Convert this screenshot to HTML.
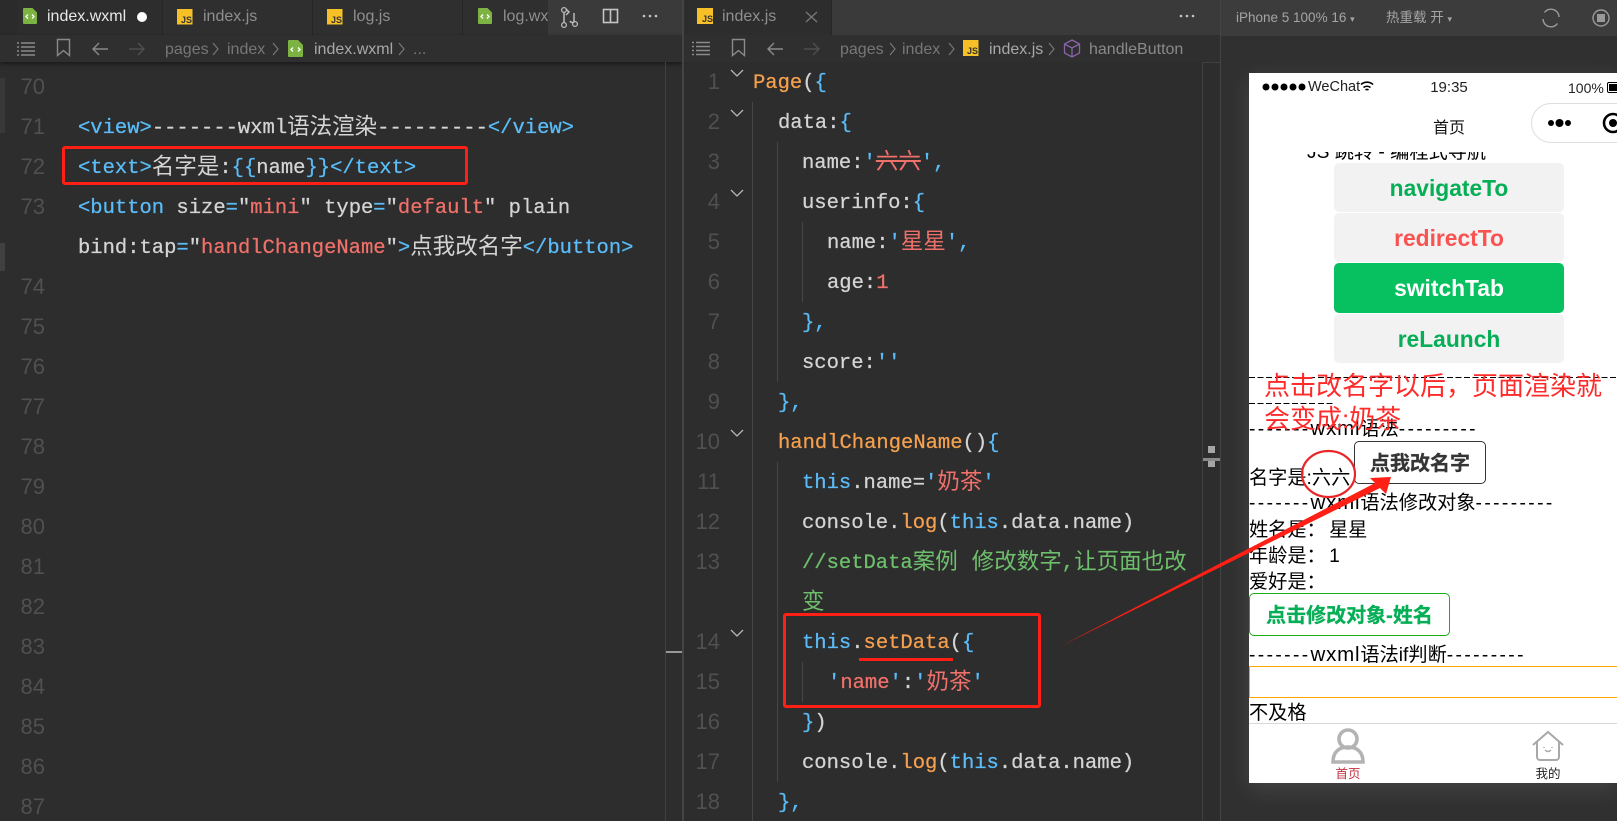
<!DOCTYPE html>
<html lang="zh"><head><meta charset="utf-8"><title>WXML editor</title>
<style>
html,body{margin:0;padding:0;background:#2d2d2d;}
#r{position:relative;width:1617px;height:821px;overflow:hidden;background:#2d2d2d;font-family:"Liberation Sans","Noto Sans CJK SC",sans-serif;}
#r *{box-sizing:border-box;}
.a{position:absolute;}
.l{position:absolute;height:40px;margin-top:2px;white-space:pre;font:20.5px/40px "Liberation Mono","Noto Sans CJK SC",monospace;color:#d4d4d4;-webkit-text-stroke:.25px currentColor;}
.l i{font-style:normal;}
.l i.c{font-family:"Noto Sans CJK SC",sans-serif;font-size:22.5px;line-height:10px;-webkit-text-stroke:0;position:relative;top:1px;}
.b{color:#5abcf8;}.s{color:#f0706a;}.o{color:#f5a04e;}.g{color:#6dbf6b;}.w{color:#d4d4d4;}
.n{position:absolute;height:40px;font:22px/40px "Liberation Sans",sans-serif;color:#505050;text-align:right;width:40px;}
.tab{position:absolute;top:0;height:35px;font-size:16px;line-height:34px;color:#8f8f8f;background:#2f2f2f;border-right:1px solid #262626;white-space:nowrap;overflow:hidden;}
.cr{position:absolute;top:35px;height:27px;font-size:16px;line-height:29px;color:#777;white-space:nowrap;}
.p{position:absolute;white-space:pre;color:#000;font-size:19.2px;line-height:26px;height:26px;}
.d{letter-spacing:2.4px;}
.x{font-size:20.5px;letter-spacing:.8px;}
.dl{position:absolute;height:1px;background:repeating-linear-gradient(90deg,#000 0 6px,transparent 6px 8.6px);}
.btn{position:absolute;left:1334px;width:230px;height:49px;border-radius:5px;background:#f2f2f2;font-weight:700;font-size:22.800px;line-height:51px;text-align:center;}
.rb{position:absolute;border:3px solid #ff1f14;border-radius:3px;}
.gd{position:absolute;width:1px;background:#464646;}
.js{position:absolute;font:bold 9px/10px "Liberation Sans",sans-serif;color:#333;}
</style></head><body><div id="r">

<!-- tab bars -->
<div class="a" style="left:0;top:0;width:683px;height:35px;background:#3a3a3a"></div>
<div class="a" style="left:684px;top:0;width:536px;height:35px;background:#3a3a3a"></div>
<div class="a" style="left:0;top:0;width:18px;height:35px;background:#2b2b2b"></div>
<div class="tab" style="left:18px;width:145px;background:#2d2d2d;color:#e8e8e8;padding-left:29px">index.wxml</div>
<div class="a" style="left:137px;top:12px;width:10px;height:10px;border-radius:50%;background:#fff;"></div>
<div class="tab" style="left:163px;width:150px;padding-left:40px">index.js</div>
<div class="tab" style="left:313px;width:150px;padding-left:40px">log.js</div>
<div class="tab" style="left:463px;width:85px;padding-left:40px;border-right:0">log.wx</div>
<div class="tab" style="left:684px;width:148px;background:#2d2d2d;padding-left:38px">index.js</div>

<!-- breadcrumbs -->
<div class="a" style="left:0;top:35px;width:683px;height:27px;background:#2f2f2f;box-shadow:0 2px 4px rgba(0,0,0,.45)"></div>
<div class="a" style="left:684px;top:35px;width:536px;height:27px;background:#2f2f2f"></div>

<!-- strips and rules -->
<div class="a" style="left:0;top:78px;width:5px;height:55px;background:#383838"></div>
<div class="a" style="left:0;top:243px;width:5px;height:28px;background:#404040"></div>
<div class="a" style="left:665px;top:62px;width:1px;height:759px;background:#404040"></div>
<div class="a" style="left:682px;top:0;width:2px;height:821px;background:#444"></div>
<div class="a" style="left:1202px;top:62px;width:1px;height:759px;background:#404040"></div>
<div class="a" style="left:1202px;top:62px;width:18px;height:1px;background:#404040"></div>
<div class="a" style="left:1220px;top:0;width:1px;height:821px;background:#444"></div>
<div class="a" style="left:666px;top:651px;width:16px;height:2px;background:#999"></div>
<div class="a" style="left:1208px;top:446px;width:7px;height:7px;background:#a5a5a5"></div>
<div class="a" style="left:1203px;top:458px;width:17px;height:3px;background:#8a8a8a"></div>
<div class="a" style="left:1208px;top:461px;width:7px;height:6px;background:#a5a5a5"></div>

<!-- tab and toolbar icons -->
<svg class="a" style="left:0;top:0" width="1220" height="62" fill="none">
<path d="M24 8h8.500l4.500 4.500V23a1 1 0 0 1-1 1H24a1 1 0 0 1-1-1V9a1 1 0 0 1 1-1z" fill="#7cb342"/><path d="M28 14.500l-2 2 2 2M32 14.500l2 2-2 2" stroke="#fff" stroke-width="1.300"/>
<g fill="#f6c026"><rect x="177" y="9" width="15.500" height="15.500"/><rect x="327" y="9" width="15.500" height="15.500"/><rect x="697" y="8" width="16" height="16"/><rect x="963" y="40" width="15.500" height="16"/></g>
<path d="M479 8h8.500l4.500 4.500V23a1 1 0 0 1-1 1h-12a1 1 0 0 1-1-1V9a1 1 0 0 1 1-1z" fill="#7cb342"/><path d="M483 14.500l-2 2 2 2M487 14.500l2 2-2 2" stroke="#fff" stroke-width="1.300"/>
<path d="M289 40h9l5 5v11a1 1 0 0 1-1 1h-13a1 1 0 0 1-1-1V41a1 1 0 0 1 1-1z" fill="#7cb342"/><path d="M293 47.500l-2 2 2 2M298 47.500l2 2-2 2" stroke="#fff" stroke-width="1.300"/>
<path d="M564 12v11M574 13v8c0 2-3 2-4 0M566 9l3 3-3 3" stroke="#bbb" stroke-width="1.500"/><circle cx="564" cy="10" r="2.400" stroke="#bbb" stroke-width="1.300"/><circle cx="564" cy="25" r="2.400" stroke="#bbb" stroke-width="1.300"/><circle cx="575" cy="24" r="2.400" stroke="#bbb" stroke-width="1.300"/>
<rect x="603.500" y="9.500" width="14" height="13" stroke="#c5c5c5" stroke-width="1.600"/><path d="M610.500 9v14" stroke="#c5c5c5" stroke-width="1.600"/>
<g fill="#c5c5c5"><circle cx="644" cy="16" r="1.300"/><circle cx="650" cy="16" r="1.300"/><circle cx="656" cy="16" r="1.300"/><circle cx="1181" cy="16" r="1.300"/><circle cx="1187" cy="16" r="1.300"/><circle cx="1193" cy="16" r="1.300"/></g>
<g stroke="#8a8a8a" stroke-width="1.400">
<path d="M17 43h2M21 43h14M17 47h2M21 47h14M17 51h2M21 51h14M17 55h2M21 55h14"/><path d="M692 42.500h2M696 42.500h14M692 46.500h2M696 46.500h14M692 50.500h2M696 50.500h14M692 54.500h2M696 54.500h14"/>
<path d="M57.500 39.500h12v16l-6-5-6 5z"/><path d="M732.500 39.500h12v16l-6-5-6 5z"/>
<path d="M108 49H93M99 43l-6 6 6 6"/><path d="M783 49h-15M774 43l-6 6 6 6"/>
</g>
<g stroke="#4f4f4f" stroke-width="1.400"><path d="M144 49h-15M138 43l6 6-6 6"/><path d="M819 49h-15M813 43l6 6-6 6"/></g>
<g stroke="#777" stroke-width="1.200"><path d="M213 43l5 6-5 6"/><path d="M273 43l5 6-5 6"/><path d="M399 43l5 6-5 6"/><path d="M890 43l5 6-5 6"/><path d="M949 43l5 6-5 6"/><path d="M1049 43l5 6-5 6"/></g>
<path d="M1072 40l7.500 4v9l-7.500 4-7.500-4v-9zM1064.500 44l7.500 4 7.500-4M1072 48v9" stroke="#8a63a8" stroke-width="1.300"/>
<path d="M806 12l11 10M817 12l-11 10" stroke="#777" stroke-width="1.400"/>
</svg>
<div class="js" style="left:181px;top:15px">JS</div>
<div class="js" style="left:331px;top:15px">JS</div>
<div class="js" style="left:702px;top:14px">JS</div>
<div class="js" style="left:967px;top:46px">JS</div>

<div class="cr" style="left:165px">pages</div><div class="cr" style="left:227px">index</div><div class="cr" style="left:314px;color:#a8a8a8">index.wxml</div><div class="cr" style="left:413px">...</div>
<div class="cr" style="left:840px">pages</div><div class="cr" style="left:902px">index</div><div class="cr" style="left:989px;color:#a8a8a8">index.js</div><div class="cr" style="left:1089px;color:#8a8a8a">handleButton</div>

<!-- left line numbers -->
<div class="n" style="left:5px;top:67px">70</div><div class="n" style="left:5px;top:107px">71</div><div class="n" style="left:5px;top:147px">72</div><div class="n" style="left:5px;top:187px">73</div>
<div class="n" style="left:5px;top:267px">74</div><div class="n" style="left:5px;top:307px">75</div><div class="n" style="left:5px;top:347px">76</div><div class="n" style="left:5px;top:387px">77</div><div class="n" style="left:5px;top:427px">78</div><div class="n" style="left:5px;top:467px">79</div><div class="n" style="left:5px;top:507px">80</div><div class="n" style="left:5px;top:547px">81</div><div class="n" style="left:5px;top:587px">82</div><div class="n" style="left:5px;top:627px">83</div><div class="n" style="left:5px;top:667px">84</div><div class="n" style="left:5px;top:707px">85</div><div class="n" style="left:5px;top:747px">86</div><div class="n" style="left:5px;top:787px">87</div>

<!-- left code -->
<div class="l" style="left:78px;top:107px"><i class="b">&lt;view&gt;</i>-------wxml<i class="c">语法渲染</i>---------<i class="b">&lt;/view&gt;</i></div>
<div class="l" style="left:78px;top:147px"><i class="b">&lt;text&gt;</i><i class="c">名字是</i>:<i class="b">{{</i>name<i class="b">}}&lt;/text&gt;</i></div>
<div class="l" style="left:78px;top:187px"><i class="b">&lt;button</i> size<i class="b">=</i>"<i class="s">mini</i>" type<i class="b">=</i>"<i class="s">default</i>" plain</div>
<div class="l" style="left:78px;top:227px">bind:tap<i class="b">=</i>"<i class="s">handlChangeName</i>"<i class="b">&gt;</i><i class="c">点我改名字</i><i class="b">&lt;/button&gt;</i></div>
<div class="rb" style="left:62px;top:146px;width:406px;height:39px"></div>

<!-- right guides -->
<div class="gd" style="left:752px;top:102px;height:719px"></div>
<div class="gd" style="left:777px;top:142px;height:240px"></div>
<div class="gd" style="left:777px;top:462px;height:320px"></div>
<div class="gd" style="left:802px;top:222px;height:80px"></div>
<div class="gd" style="left:802px;top:662px;height:40px"></div>

<!-- right numbers -->
<div class="n" style="left:680px;top:62px">1</div><div class="n" style="left:680px;top:102px">2</div><div class="n" style="left:680px;top:142px">3</div><div class="n" style="left:680px;top:182px">4</div><div class="n" style="left:680px;top:222px">5</div><div class="n" style="left:680px;top:262px">6</div><div class="n" style="left:680px;top:302px">7</div><div class="n" style="left:680px;top:342px">8</div><div class="n" style="left:680px;top:382px">9</div><div class="n" style="left:680px;top:422px">10</div><div class="n" style="left:680px;top:462px">11</div><div class="n" style="left:680px;top:502px">12</div><div class="n" style="left:680px;top:542px">13</div><div class="n" style="left:680px;top:622px">14</div><div class="n" style="left:680px;top:662px">15</div><div class="n" style="left:680px;top:702px">16</div><div class="n" style="left:680px;top:742px">17</div><div class="n" style="left:680px;top:782px">18</div>

<svg class="a" style="left:725px;top:60px" width="24" height="600" fill="none" stroke="#b5b5b5" stroke-width="1.300"><path d="M6 10l6 6 6-6M6 50l6 6 6-6M6 130l6 6 6-6M6 370l6 6 6-6M6 570l6 6 6-6"/></svg>

<!-- right code -->
<div class="l" style="left:753px;top:62px"><i class="o">Page</i><i class="w">(</i><i class="b">{</i></div>
<div class="l" style="left:778px;top:102px">data:<i class="b">{</i></div>
<div class="l" style="left:802px;top:142px">name:<i class="b">'</i><i class="c s" style="text-decoration:line-through">六六</i><i class="b">',</i></div>
<div class="l" style="left:802px;top:182px">userinfo:<i class="b">{</i></div>
<div class="l" style="left:827px;top:222px">name:<i class="b">'</i><i class="c s">星星</i><i class="b">',</i></div>
<div class="l" style="left:827px;top:262px">age:<i class="s">1</i></div>
<div class="l" style="left:802px;top:302px"><i class="b">},</i></div>
<div class="l" style="left:802px;top:342px">score:<i class="b">''</i></div>
<div class="l" style="left:778px;top:382px"><i class="b">},</i></div>
<div class="l" style="left:778px;top:422px"><i class="o">handlChangeName</i><i class="w">()</i><i class="b">{</i></div>
<div class="l" style="left:802px;top:462px"><i class="b">this</i>.name=<i class="b">'</i><i class="c s">奶茶</i><i class="b">'</i></div>
<div class="l" style="left:802px;top:502px">console.<i class="o">log</i>(<i class="b">this</i>.data.name)</div>
<div class="l g" style="left:802px;top:542px">//setData<i class="c">案例</i><i class="c" style="margin-left:14px">修改数字</i>,<i class="c">让页面也改</i></div>
<div class="l g" style="left:802px;top:582px"><i class="c">变</i></div>
<div class="l" style="left:802px;top:622px"><i class="b">this</i>.<i class="o">setData</i>(<i class="b">{</i></div>
<div class="l" style="left:828px;top:662px"><i class="b">'</i><i class="s">name</i><i class="b">'</i>:<i class="b">'</i><i class="c s">奶茶</i><i class="b">'</i></div>
<div class="l" style="left:802px;top:702px"><i class="b">}</i>)</div>
<div class="l" style="left:802px;top:742px">console.<i class="o">log</i>(<i class="b">this</i>.data.name)</div>
<div class="l" style="left:778px;top:782px"><i class="b">},</i></div>
<div class="rb" style="left:783px;top:613px;width:258px;height:95px"></div>
<div class="a" style="left:859px;top:658px;width:94px;height:3px;background:#ff1f14"></div>

<!-- simulator chrome -->
<div class="a" style="left:1221px;top:36px;width:396px;height:785px;background:#303030;overflow:hidden"><div style="position:absolute;left:28px;top:37px;width:368px;height:710px;box-shadow:0 6px 22px rgba(255,255,255,.11)"></div></div>
<div class="a" style="left:1221px;top:0;width:396px;height:36px;background:#3c3c3c"></div>
<div class="a" style="left:1236px;top:0;font-size:13.500px;line-height:36px;color:#a5a5a5;white-space:nowrap">iPhone 5 100% 16 <span style="font-size:9px">▾</span></div>
<div class="a" style="left:1386px;top:0;font-size:13.500px;line-height:36px;color:#a5a5a5;white-space:nowrap">热重载 开 <span style="font-size:9px">▾</span></div>
<svg class="a" style="left:1535px;top:8px" width="82" height="20" fill="none" stroke="#999" stroke-width="1.400"><path d="M9.500 4.500A8 8 0 0 1 24 9M22.500 15.500A8 8 0 0 1 8 11"/><circle cx="66" cy="10" r="8"/><rect x="62" y="6" width="8" height="8" fill="#999" stroke="none"/></svg>

<!-- phone -->
<div class="a" style="left:1249px;top:73px;width:368px;height:710px;background:#fff;overflow:hidden"></div>
<svg class="a" style="left:1260px;top:80px" width="50" height="14" fill="#000"><circle cx="6" cy="7" r="3.500"/><circle cx="15" cy="7" r="3.500"/><circle cx="24" cy="7" r="3.500"/><circle cx="33" cy="7" r="3.500"/><circle cx="42" cy="7" r="3.500"/></svg>
<div class="a" style="left:1308px;top:76px;font-size:14.500px;line-height:22px;color:#222">WeChat</div>
<svg class="a" style="left:1360px;top:80px" width="15" height="14" fill="none" stroke="#000" stroke-width="1.600"><path d="M1 4.500a9 9 0 0 1 12 0M3.500 7.500a5.500 5.500 0 0 1 7 0M5.500 10a2.500 2.500 0 0 1 3 0"/></svg>
<div class="a" style="left:1409px;top:76px;width:80px;text-align:center;font-size:15px;line-height:23px;color:#222">19:35</div>
<div class="a" style="left:1568px;top:77px;font-size:14px;line-height:23px;color:#222">100%</div>
<div class="a" style="left:1607px;top:82px;width:12px;height:11px;border:1.500px solid #000;border-radius:2px;padding:1px"><div style="width:100%;height:100%;background:#000"></div></div>
<div class="a" style="left:1409px;top:117px;width:80px;text-align:center;font-size:16px;line-height:24px;color:#111">首页</div>
<div class="a" style="left:1531px;top:103px;width:110px;height:40px;border:1px solid #ddd;border-radius:20px;background:#fff"></div>
<svg class="a" style="left:1545px;top:112px" width="72" height="24"><circle cx="6" cy="11" r="3" fill="#000"/><circle cx="14.500" cy="11" r="4" fill="#000"/><circle cx="23" cy="11" r="3" fill="#000"/><circle cx="68" cy="11" r="9" fill="none" stroke="#000" stroke-width="2.600"/><circle cx="68" cy="11" r="4" fill="#000"/></svg>
<div class="a" style="left:1249px;top:152px;width:368px;height:11px;overflow:hidden"><div style="position:absolute;left:58px;top:-11px;white-space:pre;font-size:19.200px;line-height:24px;color:#000">JS 跳转 - 编程式导航</div></div>

<div class="btn" style="top:163px;color:#06ae56">navigateTo</div>
<div class="btn" style="top:213px;color:#fa5151">redirectTo</div>
<div class="btn" style="top:263px;height:50px;background:#07c160;color:#fff">switchTab</div>
<div class="btn" style="top:314px;color:#06ae56">reLaunch</div>

<!-- dashed text -->
<div class="dl" style="left:1249px;top:377px;width:368px"></div>
<div class="dl" style="left:1249px;top:403px;width:86px"></div>
<div class="p" style="left:1249px;top:416px"><span class="d">-------</span><span class="x">wxml</span>语法<span class="d">---------</span></div>
<div class="a" style="left:1264px;top:370px;font-size:26px;line-height:33px;color:#ff2a2a;white-space:pre">点击改名字以后，页面渲染就</div>
<div class="a" style="left:1264px;top:403px;font-size:26px;line-height:33px;color:#ff2a2a;white-space:pre">会变成:奶茶</div>

<div class="p" style="left:1249px;top:466px">名字是:六六</div>
<div class="a" style="left:1354px;top:441px;width:132px;height:43px;border:1px solid #353535;border-radius:5px;background:#fff;color:#353535;font-weight:700;font-size:20px;line-height:45px;text-align:center;-webkit-text-stroke:.3px #353535">点我改名字</div>
<div class="p" style="left:1249px;top:490px"><span class="d">-------</span><span class="x">wxml</span>语法修改对象<span class="d">---------</span></div>
<div class="p" style="left:1249px;top:518px">姓名是：<span style="margin-left:-2px"> 星星</span></div>
<div class="p" style="left:1249px;top:544px">年龄是：<span style="margin-left:-2px"> 1</span></div>
<div class="p" style="left:1249px;top:570px">爱好是：</div>
<div class="a" style="left:1249px;top:593px;width:201px;height:43px;border:1px solid #1aad19;border-radius:5px;background:#fff;color:#06ae56;font-weight:700;font-size:20px;line-height:45px;text-align:center;white-space:nowrap;-webkit-text-stroke:.3px #06ae56">点击修改对象-姓名</div>
<div class="p" style="left:1249px;top:642px"><span class="d">-------</span><span class="x">wxml</span>语法if判断<span class="d">---------</span></div>
<div class="a" style="left:1249px;top:666px;width:368px;height:32px;border:1px solid #ffa500;border-right:0"></div>
<div class="p" style="left:1249px;top:701px">不及格</div>
<div class="a" style="left:1249px;top:723px;width:368px;height:60px;background:#fff;border-top:1px solid #d8d8d8"></div>
<svg class="a" style="left:1325px;top:728px" width="46" height="36" fill="none" stroke="#b3b3b3" stroke-width="3.600"><circle cx="23" cy="11" r="9"/><path d="M8 34c0-10 6-15 15-15s15 5 15 15z"/></svg>
<svg class="a" style="left:1531px;top:730px" width="34" height="34" fill="none" stroke="#a9a9a9" stroke-width="2"><path d="M2 15L17 2l15 13M6 12v15a3 3 0 0 0 3 3h16a3 3 0 0 0 3-3V12"/><path d="M13 17v1M21 17v1M14 20q3 3 6 0" stroke-width="1.500"/></svg>
<div class="a" style="left:1328px;top:766px;width:40px;text-align:center;font-size:12.500px;line-height:16px;color:#c3333f">首页</div>
<div class="a" style="left:1528px;top:766px;width:40px;text-align:center;font-size:12.500px;line-height:16px;color:#222">我的</div>

<!-- annotations -->
<svg class="a" style="left:0;top:0" width="1617" height="821" fill="none">
<ellipse cx="1328.500" cy="474" rx="26.500" ry="23" stroke="#e8262a" stroke-width="2.200"/>
<polygon points="1059,647 1377,482 1380,488" fill="#ff1f14"/>
<polygon points="1391,477 1370,478 1386,494" fill="#ff1f14"/>
</svg>
</div></body></html>
